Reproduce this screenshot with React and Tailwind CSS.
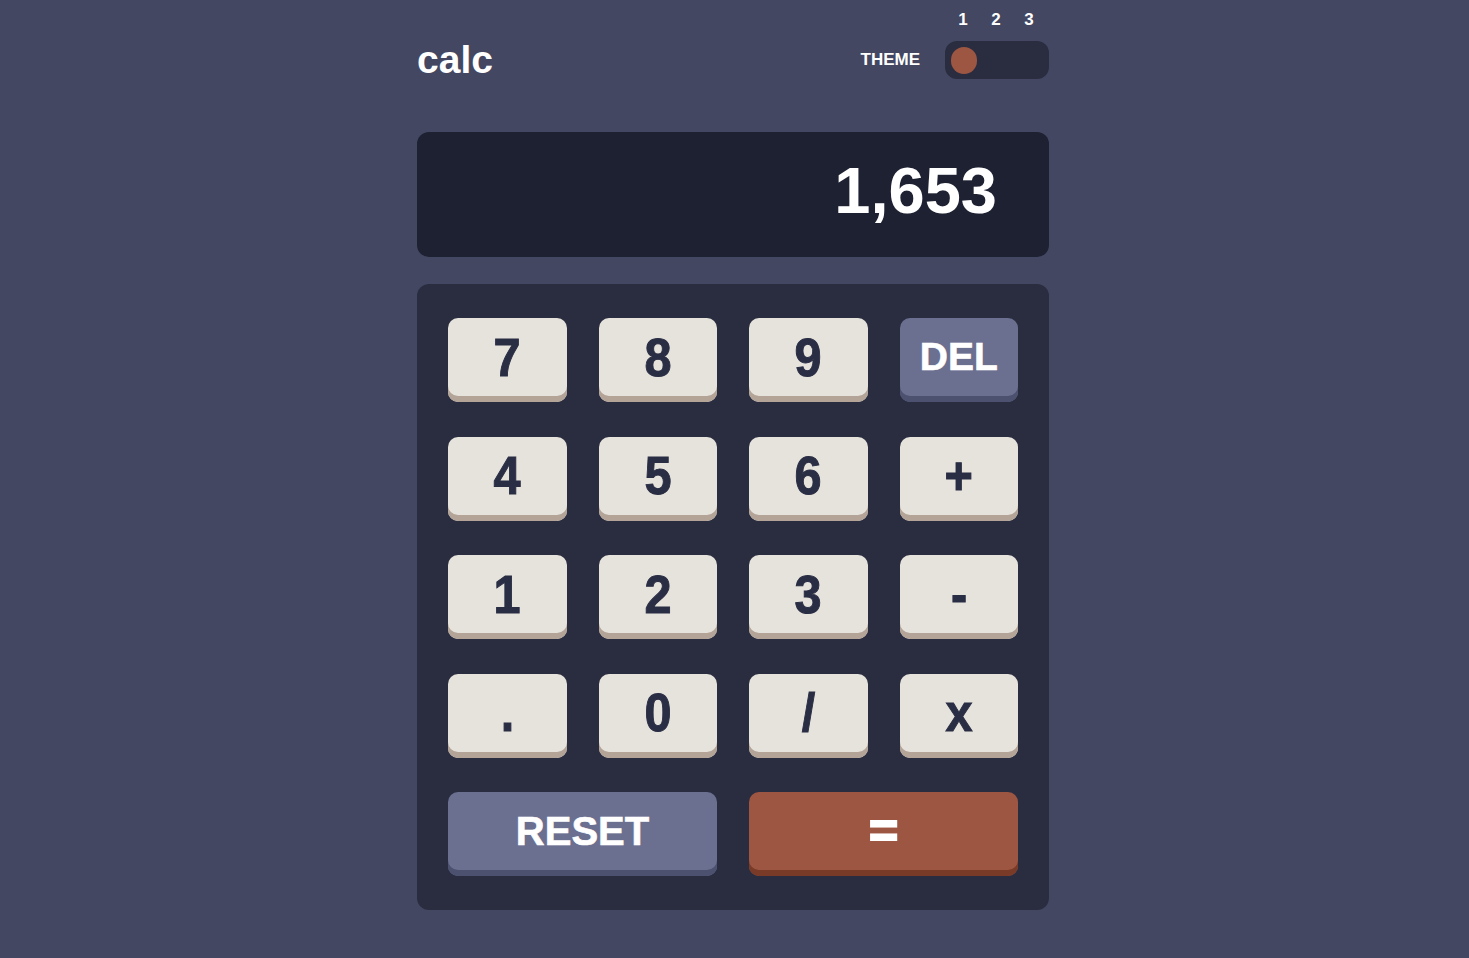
const keys = [
  { label: '7' }, { label: '8' }, { label: '9' }, { label: 'DEL', kind: 'blue' },
  { label: '4' }, { label: '5' }, { label: '6' }, { label: '+' },
  { label: '1' }, { label: '2' }, { label: '3' }, { label: '-' },
  { label: '.' }, { label: '0' }, { label: '/' }, { label: 'x' },
];

function Key({ label, kind }) {
  if (kind === 'blue') {
    return (
      <button className="h-[84px] rounded-[10px] bg-[#6b7090] shadow-[inset_0_-6px_0_#4c5170] text-white text-[39px] font-bold pb-[6px] flex items-center justify-center [-webkit-text-stroke:0.6px_#ffffff]">
        {label}
      </button>
    );
  }
  return (
    <button className="h-[84px] rounded-[10px] bg-[#e6e3dd] shadow-[inset_0_-6px_0_#b3a497] text-[#2a2e44] text-[54px] font-bold pb-[6px] flex items-center justify-center">
      <span className="inline-block scale-x-[0.9] [-webkit-text-stroke:1px_#2a2e44]">{label}</span>
    </button>
  );
}

export default function App() {
  return (
    <div className="min-h-screen bg-[#434761] pt-[10px] pr-[3px] flex justify-center font-['Liberation_Sans',Arial,sans-serif]">
      <div className="w-[632px]">
        {/* Header */}
        <div className="flex items-end justify-between">
          <div className="h-[38px] flex items-center text-white text-[39px] font-bold">calc</div>
          <div className="flex items-end gap-[25px]">
            <div className="h-[38px] flex items-center text-white text-[17px] font-bold">THEME</div>
            <div className="w-[104px]">
              <div className="flex pl-[1.5px] h-[20px] items-center text-white text-[17px] font-bold">
                <span className="w-[33px] text-center">1</span>
                <span className="w-[33px] text-center">2</span>
                <span className="w-[33px] text-center">3</span>
              </div>
              <div className="mt-[11px] h-[38px] rounded-[12px] bg-[#2a2d40] flex items-center px-[6px]">
                <div className="w-[26px] h-[27px] rounded-full bg-[#9d5641]" />
              </div>
            </div>
          </div>
        </div>

        {/* Display */}
        <div className="mt-[53px] h-[125px] rounded-[12px] bg-[#1e2132] flex items-center justify-end pr-[52px] pb-[8px] text-white text-[65px] font-bold">
          1,653
        </div>

        {/* Keypad */}
        <div className="mt-[27px] rounded-[12px] bg-[#2a2d40] px-[31px] py-[34px]">
          <div className="grid grid-cols-4 gap-x-[32px] gap-y-[34.5px]">
            {keys.map((k) => (
              <Key key={k.label} {...k} />
            ))}
            <button className="col-span-2 h-[84px] rounded-[10px] bg-[#6b7090] shadow-[inset_0_-6px_0_#4c5170] text-white text-[40px] font-bold pb-[6px] flex items-center justify-center [-webkit-text-stroke:0.6px_#ffffff]">
              RESET
            </button>
            <button className="col-span-2 h-[84px] rounded-[10px] bg-[#9d5641] shadow-[inset_0_-6px_0_#7a3a28] text-white text-[50px] font-bold pb-[6px] flex items-center justify-center [-webkit-text-stroke:2px_#ffffff]">
              =
            </button>
          </div>
        </div>
      </div>
    </div>
  );
}
